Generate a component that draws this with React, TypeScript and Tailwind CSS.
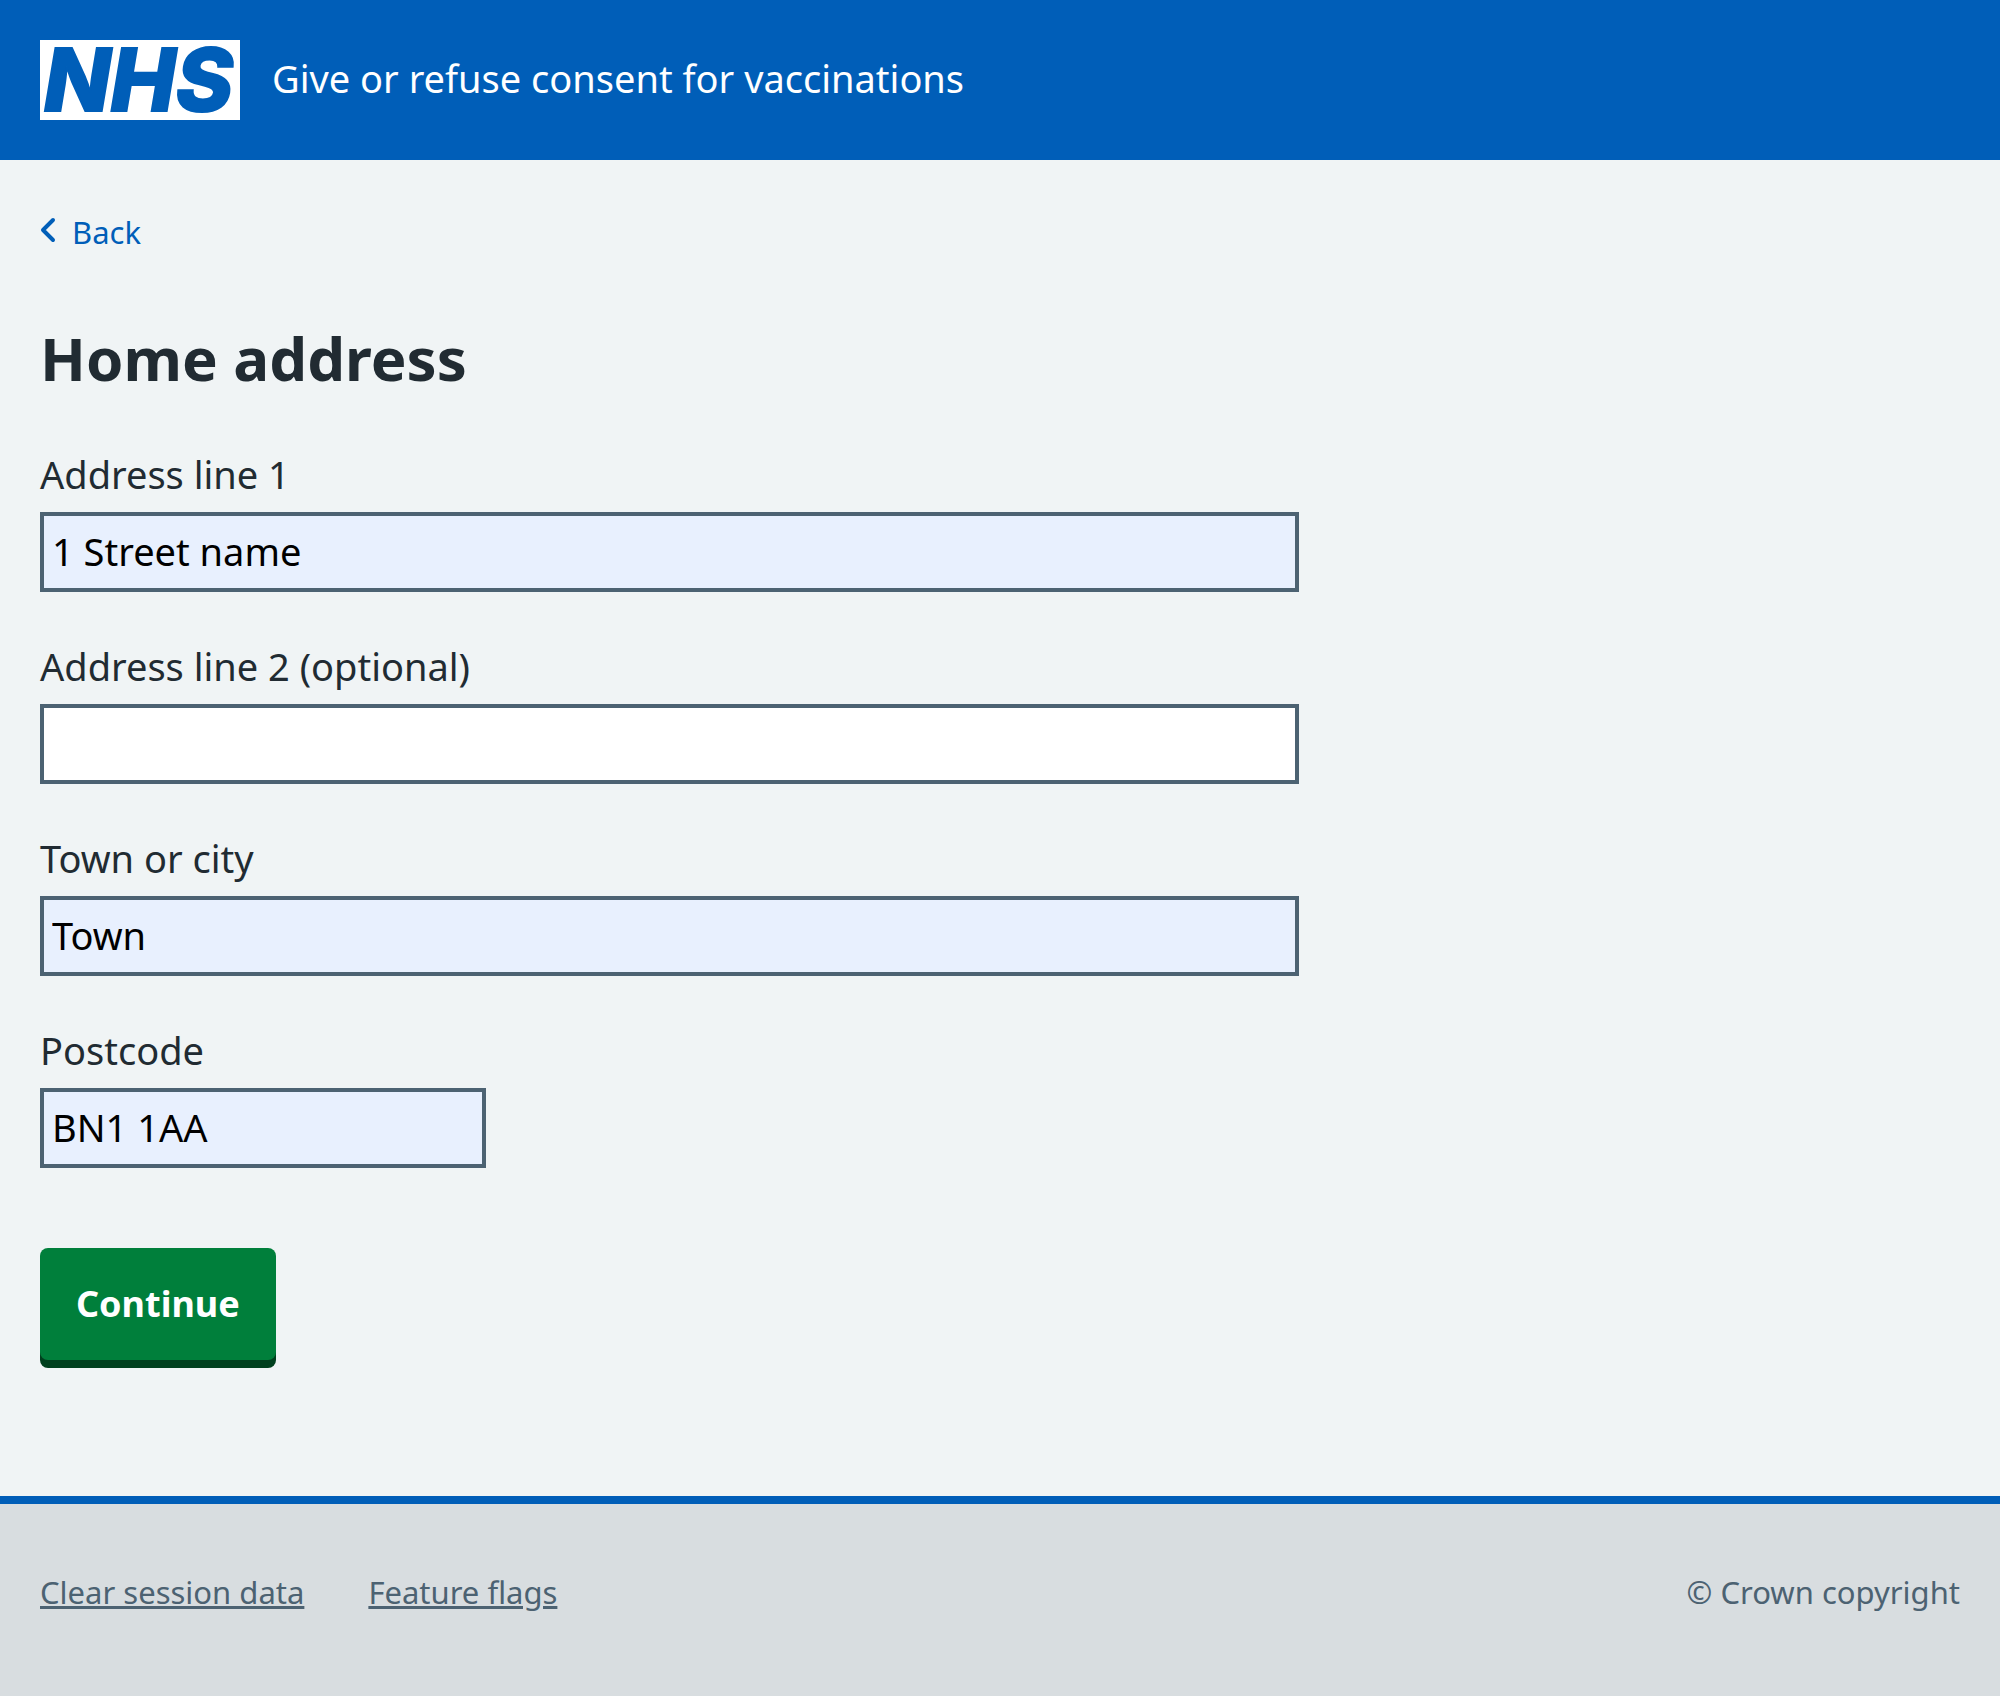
import React from "react";

type FieldProps = {
  id: string;
  label: string;
  value?: string;
  width?: string;
};

function Field({ id, label, value = "", width = "w-full" }: FieldProps) {
  const fill = value ? "bg-[#e8f0fe]" : "bg-white";
  return (
    <div className="flex flex-col gap-3">
      <label htmlFor={id} className="text-[38px] leading-[52px]">
        {label}
      </label>
      <input
        id={id}
        type="text"
        defaultValue={value}
        className={`h-20 border-4 border-[#4c6272] px-2 pb-0.5 text-[38px] text-black outline-none ${fill} ${width}`}
      />
    </div>
  );
}

function Logo() {
  return (
    <svg viewBox="0 0 200 80" role="img" aria-label="NHS" className="h-20 w-[200px] shrink-0 overflow-visible">
      <rect width="200" height="80" fill="#fff" />
      <text
        x="4"
        y="71"
        fontFamily="Inter"
        fontSize="87"
        fontWeight="800"
        fontStyle="italic"
        fill="#005eb8"
        stroke="#005eb8"
        strokeWidth="2"
      >
        NHS
      </text>
    </svg>
  );
}

export default function App() {
  return (
    <div className="flex min-h-screen flex-col bg-[#f0f4f5] font-['Noto_Sans',sans-serif] text-[#212b32]">
      <header className="flex items-center gap-8 bg-[#005eb8] p-10">
        <a href="#home">
          <Logo />
        </a>
        <a href="#service" className="pb-1 text-[38px] leading-[52px] text-white">
          Give or refuse consent for vaccinations
        </a>
      </header>

      <main className="grow px-10 pt-12 pb-32">
        <a href="#back" className="inline-flex items-center gap-4 text-[31px] leading-[48px] text-[#005eb8]">
          <svg viewBox="0 0 16 24" className="mb-1 h-6 w-4 overflow-visible" fill="none" stroke="currentColor" strokeWidth="4" strokeLinecap="round" strokeLinejoin="round">
            <path d="M13 2 3 12l10 10" />
          </svg>
          Back
        </a>
        <div className="-mx-8">
          <form className="w-2/3 px-8" onSubmit={(e) => e.preventDefault()}>
            <h1 className="mt-16 mb-[52px] text-[60px] leading-[76px] font-bold">Home address</h1>
            <div className="flex flex-col gap-12">
              <Field id="address-1" label="Address line 1" value="1 Street name" />
              <Field id="address-2" label="Address line 2 (optional)" />
              <Field id="town" label="Town or city" value="Town" />
              <Field id="postcode" label="Postcode" value="BN1 1AA" width="w-[446px]" />
            </div>
            <button
              type="submit"
              className="mt-20 h-28 rounded-lg bg-[#007f3b] px-9 text-[36px] font-bold text-white shadow-[0_8px_0_#00401e]"
            >
              Continue
            </button>
          </form>
        </div>
      </main>

      <footer className="flex items-start justify-between border-t-8 border-[#005eb8] bg-[#d8dde0] px-10 pt-16 pb-20 text-[31px] leading-[48px] text-[#4c6272]">
        <nav className="flex gap-16">
          <a href="#clear" className="underline decoration-3 underline-offset-2">Clear session data</a>
          <a href="#flags" className="underline decoration-3 underline-offset-2">Feature flags</a>
        </nav>
        <p>© Crown copyright</p>
      </footer>
    </div>
  );
}
